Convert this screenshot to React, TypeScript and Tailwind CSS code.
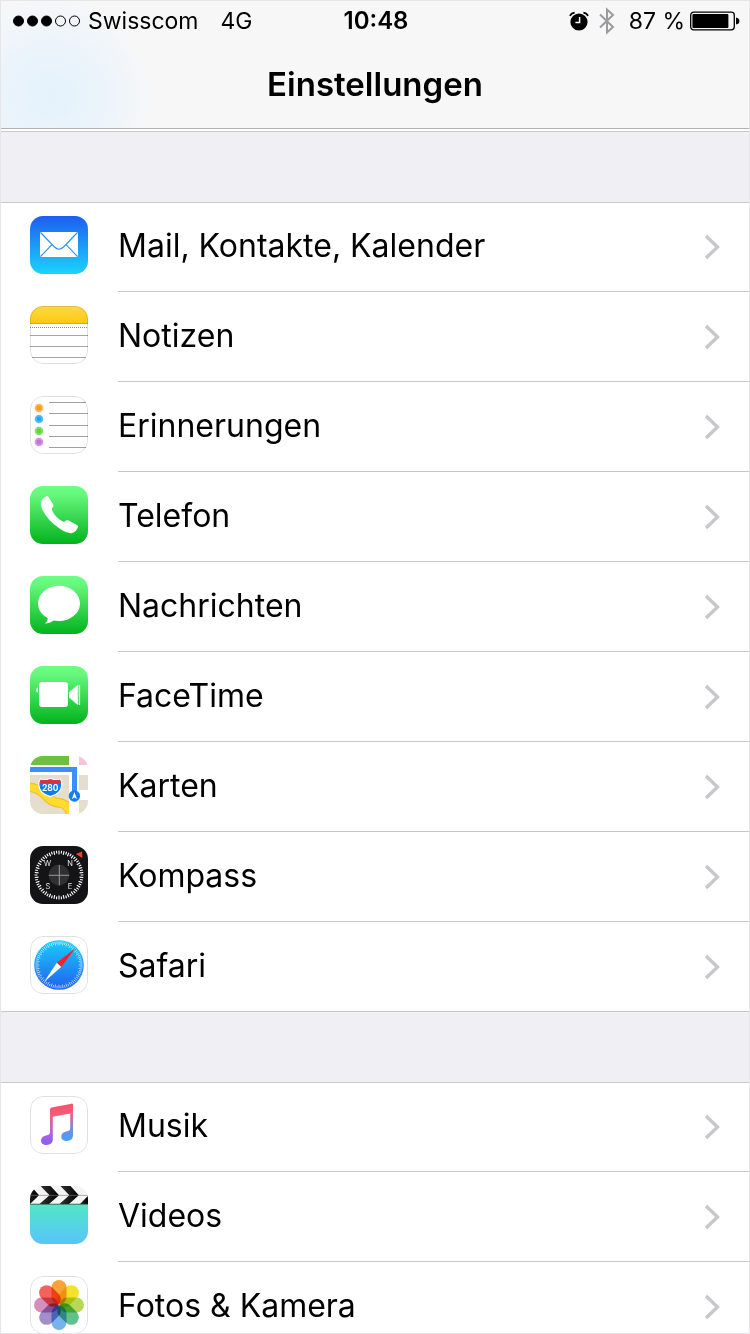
import type { ReactNode } from "react";

type Entry = {
  id: string;
  label: string;
  icon: ReactNode;
  outlined?: boolean;
};

const polar = (angle: number, radius: number) => {
  const rad = (angle * Math.PI) / 180;
  return { x: 29 + Math.sin(rad) * radius, y: 29 - Math.cos(rad) * radius };
};

function Ticks({
  count,
  inner,
  outer,
  width,
}: {
  count: number;
  inner: number;
  outer: number;
  width: number;
}) {
  return (
    <g stroke="#fff" strokeWidth={width}>
      {Array.from({ length: count }, (_, i) => {
        const a = polar((i * 360) / count, i % 2 ? inner + 1 : inner);
        const b = polar((i * 360) / count, outer);
        return <line key={i} x1={a.x} y1={a.y} x2={b.x} y2={b.y} />;
      })}
    </g>
  );
}

function GreenBackground({ id }: { id: string }) {
  return (
    <>
      <defs>
        <linearGradient id={id} x1="0" y1="0" x2="0" y2="1">
          <stop offset="0" stopColor="#6cff83" />
          <stop offset="0.15" stopColor="#66f77c" />
          <stop offset="1" stopColor="#02b31c" />
        </linearGradient>
      </defs>
      <rect width="58" height="58" fill={`url(#${id})`} />
    </>
  );
}

const mailIcon = (
  <>
    <defs>
      <linearGradient id="mail-bg" x1="0" y1="0" x2="0" y2="1">
        <stop offset="0" stopColor="#1e5df0" />
        <stop offset="1" stopColor="#1ad4fd" />
      </linearGradient>
    </defs>
    <rect width="58" height="58" fill="url(#mail-bg)" />
    <rect x="10" y="16" width="38" height="25" rx="1" fill="#fff" />
    <g fill="none" stroke="#2b8ff5" strokeWidth="1.1">
      <path d="M10.5 16.5 L24.5 31 Q29 35.5 33.5 31 L47.5 16.5" />
      <path d="M10.5 40.5 L22 28.6 M47.5 40.5 L36 28.6" />
    </g>
  </>
);

const notesIcon = (
  <>
    <defs>
      <linearGradient id="notes-top" x1="0" y1="0" x2="0" y2="1">
        <stop offset="0" stopColor="#fed74c" />
        <stop offset="1" stopColor="#fdc90b" />
      </linearGradient>
    </defs>
    <rect width="58" height="58" fill="#fff" />
    <rect width="58" height="18" fill="url(#notes-top)" />
    <path d="M0 17.5 H58" stroke="#d8ac1c" />
    <path d="M0 21.5 H58" stroke="#8e8e8e" strokeDasharray="1 1" />
    <path d="M0 29.5 H58 M0 40.5 H58 M2 51.5 H56" stroke="#a6a6a6" />
  </>
);

const remindersIcon = (
  <>
    <rect width="58" height="58" fill="#fff" />
    {[
      { y: 12, color: "#fd9a1e" },
      { y: 23, color: "#20a8f6" },
      { y: 35, color: "#5cd63a" },
      { y: 46, color: "#c86edd" },
    ].map((dot) => (
      <g key={dot.y} fill={dot.color}>
        <circle cx="9" cy={dot.y} r="4.3" opacity="0.75" />
        <circle cx="9" cy={dot.y} r="2.4" />
      </g>
    ))}
    <path
      d="M19 6.5 H56 M19 17.5 H58 M19 29.5 H58 M19 40.5 H58 M19 51.5 H56"
      stroke="#a0a0a0"
    />
  </>
);

const phoneIcon = (
  <>
    <GreenBackground id="phone-bg" />
    <path
      d="M16.2 10.3 Q17.6 9.6 18.5 10.9 L23.2 18.6 Q24 20 23 21 Q21.2 22.7 22.3 25 Q25.6 31.3 31.8 35 Q34.3 36.3 35.5 34.9 Q36.8 33.6 38.5 34.4 L47 39 Q48.6 40 47.8 41.5 Q45.5 46.6 41.5 47.2 Q37 47.6 29.5 42.6 Q17.5 34.3 12.3 23.5 Q9.5 17.3 11.8 14 Q13.3 11.8 16.2 10.3 Z"
      fill="#fff"
    />
  </>
);

const messagesIcon = (
  <>
    <GreenBackground id="messages-bg" />
    <ellipse cx="29" cy="27.4" rx="21" ry="17.6" fill="#fff" />
    <path d="M17.6 40 Q18.4 44.8 15 47.6 Q20.6 47.4 24.5 43.5 Z" fill="#fff" />
  </>
);

const facetimeIcon = (
  <>
    <GreenBackground id="facetime-bg" />
    <g fill="#fff">
      <rect x="9" y="16" width="29" height="25" rx="3.2" />
      <path d="M39 26.3 L47.8 19 V39 L39 31.5 Z" />
      <rect x="48.7" y="19" width="1.4" height="20" />
      <path d="M8 21.5 V26.5 Q6 26.3 6 24 Q6 21.8 8 21.5 Z" />
    </g>
  </>
);

const mapsIcon = (
  <>
    <rect width="58" height="58" fill="#e5decd" />
    <path
      d="M-2 31 Q8 32 14 38 Q22 47 30 47 Q38 48 42 60"
      fill="none"
      stroke="#f0bd2a"
      strokeWidth="9.5"
    />
    <path
      d="M-2 31 Q8 32 14 38 Q22 47 30 47 Q38 48 42 60"
      fill="none"
      stroke="#ffdc2e"
      strokeWidth="7.5"
    />
    <path d="M0 9 H58 V19 H0 Z M39 0 H49 V58 H39 Z" fill="#fff" />
    <path d="M49 34 H58 V44 H49 Z" fill="#fff" />
    <rect width="39" height="9" fill="#6dc13f" />
    <rect x="49" width="9" height="9" fill="#f8c3d3" />
    <path d="M0 11 H47 V40 H42 V16 H0 Z" fill="#3b8ffc" />
    <path
      d="M10.5 23 Q15 24.6 20.3 22.6 Q26 24.6 30.3 23 Q32 25.5 31.8 29 Q31.3 37.6 20.3 40.6 Q9.4 37.6 8.8 29 Q8.6 25.5 10.5 23 Z"
      fill="#0b7cf3"
      stroke="#fff"
      strokeWidth="1.2"
    />
    <path d="M10.6 23.7 Q15 25.2 20.3 23.3 Q26 25.2 30 23.7 L31 27 H9.6 Z" fill="#d9303c" />
    <text
      x="20.3"
      y="34.6"
      textAnchor="middle"
      fill="#fff"
      fontSize="8.5"
      fontWeight="700"
      fontFamily="Inter, sans-serif"
    >
      280
    </text>
    <circle cx="44.4" cy="40" r="5.7" fill="#147df5" />
    <path d="M44.4 36 L47 43 L44.4 41.6 L41.8 43 Z" fill="#fff" />
  </>
);

const compassIcon = (
  <>
    <rect width="58" height="58" fill="#141416" />
    <Ticks count={60} inner={20.6} outer={24.4} width={1.1} />
    <circle cx="29" cy="29" r="10.4" fill="#303032" />
    <path d="M18.8 29.3 H39.2 M29.3 19 V39.4" stroke="#a5a5a5" strokeWidth="0.9" />
    <g fill="#e0e0e0" fontSize="7.5" fontFamily="Inter, sans-serif" textAnchor="middle">
      <text x="17.4" y="20.4">W</text>
      <text x="40" y="20.4">N</text>
      <text x="18" y="43">S</text>
      <text x="40" y="43">E</text>
    </g>
    <path d="M46 8 L52 5.4 L52.3 12 Z" fill="#ff3b30" />
  </>
);

const safariIcon = (
  <>
    <defs>
      <linearGradient id="safari-bg" x1="0" y1="0" x2="0" y2="1">
        <stop offset="0" stopColor="#1ccbfb" />
        <stop offset="1" stopColor="#1f62ee" />
      </linearGradient>
    </defs>
    <rect width="58" height="58" fill="#fff" />
    <circle cx="29" cy="29" r="24.8" fill="url(#safari-bg)" />
    <g opacity="0.8">
      <Ticks count={72} inner={19.8} outer={23.6} width={0.8} />
    </g>
    <path d="M45.5 12 L31.2 31 L26.8 26.8 Z" fill="#fb1f25" />
    <path d="M14 46 L26.8 26.8 L31.2 31 Z" fill="#fff" />
  </>
);

const musicIcon = (
  <>
    <defs>
      <linearGradient id="music-note" x1="20" y1="8" x2="20" y2="49" gradientUnits="userSpaceOnUse">
        <stop offset="0" stopColor="#fb4f63" />
        <stop offset="0.3" stopColor="#f2607f" />
        <stop offset="0.65" stopColor="#b366d8" />
        <stop offset="1" stopColor="#8a5cf8" />
      </linearGradient>
      <linearGradient id="music-stem" x1="40" y1="8" x2="40" y2="45" gradientUnits="userSpaceOnUse">
        <stop offset="0" stopColor="#fb4f63" />
        <stop offset="0.3" stopColor="#e8648d" />
        <stop offset="0.65" stopColor="#7f86e0" />
        <stop offset="1" stopColor="#3fa4f8" />
      </linearGradient>
    </defs>
    <rect width="58" height="58" fill="#fff" />
    <path
      d="M20 13.6 Q20 12 21.6 11.6 L41.8 7.8 Q43 7.6 43 9 V17 L22.8 20.8 V43.5 Q22.6 48.6 16.5 49 Q11 49 11 44.6 Q11.2 40.3 16 39.4 Q20 39 20 36.6 Z"
      fill="url(#music-note)"
    />
    <path
      d="M40.2 17.4 V8.2 L41.8 7.8 Q43 7.6 43 9 V39.5 Q42.7 44.6 36.8 45 Q31.2 45 31.2 40.6 Q31.4 36.3 36.2 35.4 Q40.2 35 40.2 32.6 Z"
      fill="url(#music-stem)"
    />
  </>
);

const videosIcon = (
  <>
    <defs>
      <linearGradient id="videos-bg" x1="0" y1="0" x2="0" y2="1">
        <stop offset="0" stopColor="#50e8c4" />
        <stop offset="1" stopColor="#58c4fb" />
      </linearGradient>
      <linearGradient id="videos-stripe" x1="0" y1="0" x2="1" y2="0">
        <stop offset="0" stopColor="#333" />
        <stop offset="1" stopColor="#000" />
      </linearGradient>
    </defs>
    <rect width="58" height="58" fill="#f4f4f4" />
    <rect y="18" width="58" height="40" fill="url(#videos-bg)" />
    <g fill="url(#videos-stripe)">
      <path d="M-9 0 H1 L9 9.3 L0 18 H-9 Z" />
      <path d="M10.5 0 H20.5 L29 9.3 L19 18 H9.5 L19.5 9.3 Z" />
      <path d="M30.5 0 H40.5 L48.8 9.3 L39 18 H29.5 L39.3 9.3 Z" />
      <path d="M58 9.8 V18 H50 Z" />
    </g>
    <path d="M0 9.4 H58" stroke="#777" strokeWidth="0.6" />
    <path d="M0 18.2 H58" stroke="#333" strokeWidth="0.7" />
    <path d="M52 0 L58 6" stroke="#777" strokeWidth="0.6" />
  </>
);

const petals = [
  "#faa23a",
  "#f3e22b",
  "#b5d957",
  "#62c08f",
  "#74b4ea",
  "#a08fcb",
  "#d48fbd",
  "#f4625a",
];

const photosIcon = (
  <>
    <rect width="58" height="58" fill="#fff" />
    {petals.map((color, i) => (
      <rect
        key={color}
        x="21.5"
        y="4"
        width="15"
        height="24.5"
        rx="7.5"
        fill={color}
        className="mix-blend-multiply"
        transform={`rotate(${i * 45} 29 29)`}
      />
    ))}
  </>
);

const groups: Entry[][] = [
  [
    { id: "mail", label: "Mail, Kontakte, Kalender", icon: mailIcon },
    { id: "notizen", label: "Notizen", icon: notesIcon, outlined: true },
    { id: "erinnerungen", label: "Erinnerungen", icon: remindersIcon, outlined: true },
    { id: "telefon", label: "Telefon", icon: phoneIcon },
    { id: "nachrichten", label: "Nachrichten", icon: messagesIcon },
    { id: "facetime", label: "FaceTime", icon: facetimeIcon },
    { id: "karten", label: "Karten", icon: mapsIcon },
    { id: "kompass", label: "Kompass", icon: compassIcon },
    { id: "safari", label: "Safari", icon: safariIcon, outlined: true },
  ],
  [
    { id: "musik", label: "Musik", icon: musicIcon, outlined: true },
    { id: "videos", label: "Videos", icon: videosIcon },
    { id: "fotos", label: "Fotos & Kamera", icon: photosIcon, outlined: true },
  ],
];

function AppIcon({ icon, outlined }: { icon: ReactNode; outlined?: boolean }) {
  return (
    <svg viewBox="0 0 58 58" className="size-[58px] shrink-0 rounded-[13px]" aria-hidden="true">
      {icon}
      {outlined && (
        <rect x="0.5" y="0.5" width="57" height="57" rx="12.5" fill="none" stroke="#000" strokeOpacity="0.12" />
      )}
    </svg>
  );
}

function Row({ entry }: { entry: Entry }) {
  return (
    <li className="group border-[#c8c7cc] first:-mt-px last:border-b">
      <a
        href={`#${entry.id}`}
        className="flex h-[90px] items-stretch pl-[29px] group-last:h-[89px]"
      >
        <span className="pt-[14px]">
          <AppIcon icon={entry.icon} outlined={entry.outlined} />
        </span>
        <span className="ml-[30px] flex flex-1 items-center justify-between border-b border-[#c8c7cc] pr-[29px] group-last:border-b-0">
          <span className="pb-[2px] text-[32px] leading-10">{entry.label}</span>
          <svg viewBox="0 0 16 26" className="h-[26px] w-4" aria-hidden="true">
            <path d="M2 2 L13.5 13 L2 24" fill="none" stroke="#c7c7cc" strokeWidth="3.4" />
          </svg>
        </span>
      </a>
    </li>
  );
}

function StatusBar() {
  return (
    <div className="grid h-10 grid-cols-[1fr_auto_1fr] items-center pr-[9px] pl-[11px] text-[23px] leading-7">
      <div className="flex items-center">
        <svg viewBox="0 0 70 14" className="h-[14px] w-[70px]" aria-hidden="true">
          {[0, 1, 2, 3, 4].map((i) => (
            <circle
              key={i}
              cx={6.5 + i * 14}
              cy="7"
              r="5"
              fill={i < 3 ? "#000" : "none"}
              stroke="#000"
            />
          ))}
        </svg>
        <span className="ml-[6px]">Swisscom</span>
        <span className="ml-[22px]">4G</span>
      </div>
      <time className="text-[24px] font-semibold">10:48</time>
      <div className="flex items-center justify-end">
        <svg viewBox="0 0 20 20" className="size-5" aria-hidden="true">
          <circle cx="10" cy="11" r="8.6" />
          <path d="M10.6 6 V11.6 H6.4" fill="none" stroke="#fff" strokeWidth="1.5" />
          <path d="M1 5 Q2 2 5.6 1.6 M19 5 Q18 2 14.4 1.6" fill="none" stroke="#000" strokeWidth="1.6" />
        </svg>
        <svg viewBox="0 0 16 28" className="ml-[10px] h-7 w-4" aria-hidden="true">
          <path
            d="M1 7.5 L14 20 L8 25.5 V2.5 L14 8 L1 20.5"
            fill="none"
            stroke="#9b9b9d"
            strokeWidth="2"
          />
        </svg>
        <span className="ml-[14px]">87 %</span>
        <svg viewBox="0 0 50 20" className="ml-[5px] h-5 w-[50px]" aria-hidden="true">
          <rect x="0.7" y="1.2" width="43.6" height="17.6" rx="3" fill="none" stroke="#000" strokeWidth="1.3" />
          <rect x="2.4" y="3" width="36" height="14" rx="1" />
          <path d="M46 6.5 Q49.4 7 49.4 10 Q49.4 13 46 13.5 Z" />
        </svg>
      </div>
    </div>
  );
}

export default function App() {
  return (
    <div className="h-screen overflow-hidden border border-[#e6e6e8] bg-[#efeff4] font-[Inter,'Liberation_Sans',sans-serif] text-black">
      <header className="h-32 border-b border-[#b2b2b5] bg-[#f7f7f8] bg-[radial-gradient(circle_at_50px_95px,#e4f2fc_0,#ebf4fb_50px,transparent_100px)]">
        <StatusBar />
        <h1 className="pt-[22px] text-center text-[33px] leading-[42px] font-semibold">Einstellungen</h1>
      </header>
      <div className="h-[3px] border-b border-[#c8c7cc] bg-white" />
      <main>
        {groups.map((entries) => (
          <ul key={entries[0].id} className="mt-[70px] border-t border-[#c8c7cc] bg-white">
            {entries.map((entry) => (
              <Row key={entry.id} entry={entry} />
            ))}
          </ul>
        ))}
      </main>
    </div>
  );
}
